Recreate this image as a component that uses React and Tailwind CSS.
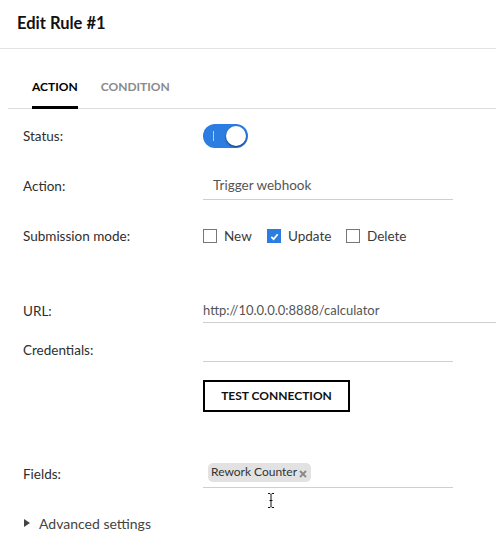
import { useState } from 'react';

const FONT = { fontFamily: 'Lato, "Open Sans", sans-serif' };

function Toggle() {
  return (
    <div className="relative w-[45px] h-[24px] rounded-full bg-[#2b7de1]">
      <span className="absolute left-[10px] top-[7px] w-px h-[10px] bg-[#a9d0f5]" />
      <span className="absolute right-[2px] top-[2px] w-[20px] h-[20px] rounded-full bg-white shadow-[0_1px_2px_rgba(0,0,40,0.6)]" />
    </div>
  );
}

function Checkbox({ checked, label, className = '' }) {
  return (
    <label className={`flex items-center gap-[7px] text-[13.5px] text-[#3a3a3a] ${className}`}>
      {checked ? (
        <span className="w-[14px] h-[14px] bg-[#2b7de1] flex items-center justify-center">
          <svg width="9" height="9" viewBox="0 0 10 10" fill="none" stroke="white" strokeWidth="2">
            <path d="M1.5 5.5 L4 8 L8.5 2.5" />
          </svg>
        </span>
      ) : (
        <span className="w-[14px] h-[14px] border border-[#777] bg-white" />
      )}
      {label}
    </label>
  );
}

function Row({ label, className = '', children }) {
  return (
    <div className={`flex items-center ${className}`}>
      <div className="w-[180px] shrink-0 text-[13.5px] text-[#2e2e2e]">{label}</div>
      {children}
    </div>
  );
}

export default function App() {
  const [tab] = useState('action');

  return (
    <div className="w-[496px] h-[551px] bg-white overflow-hidden relative" style={FONT}>
      {/* Header */}
      <div className="h-[49px] border-b border-[#e3e3e3] flex items-center px-[17px]">
        <h1 className="text-[16.5px] font-bold text-[#111] -mt-[2px]">Edit Rule #1</h1>
      </div>

      {/* Tabs */}
      <div className="ml-2 h-[60px] border-b border-[#dcdcdc] flex items-end gap-[23px] pl-6">
        <div className={`pb-[10px] -mb-px border-b-[3px] text-[12px] font-bold ${tab === 'action' ? 'border-black text-black' : 'border-transparent'}`}>
          ACTION
        </div>
        <div className="pb-[10px] -mb-px border-b-[3px] border-transparent text-[12px] font-bold text-[#8a8a8a]">
          CONDITION
        </div>
      </div>

      {/* Form */}
      <div className="pl-[23px] pt-[3px]">
        <Row label="Status:" className="h-[48px]">
          <Toggle />
        </Row>

        <Row label="Action:" className="h-[52px]">
          <div className="w-[250px] h-[28px] border-b border-[#cfcfcf] pl-[10px] pt-[3px] text-[13.5px] text-[#555]">
            Trigger webhook
          </div>
        </Row>

        <Row label="Submission mode:" className="h-[48px]">
          <div className="flex items-center">
            <Checkbox label="New" className="w-[64px]" />
            <Checkbox checked label="Update" className="w-[79px]" />
            <Checkbox label="Delete" />
          </div>
        </Row>

        <Row label="URL:" className="h-[48px] mt-[27px]">
          <div className="w-[310px] shrink-0 h-[24px] border-b border-[#cfcfcf] pt-[2px] text-[13px] text-[#555]">
            http://10.0.0.0:8888/calculator
          </div>
        </Row>

        <Row label="Credentials:" className="h-[30px]">
          <div className="w-[250px] h-[24px] border-b border-[#cfcfcf]" />
        </Row>

        <div className="ml-[180px] mt-[15px]">
          <button className="w-[147px] h-[32px] border-2 border-black text-[12px] font-bold text-[#111]">
            TEST CONNECTION
          </button>
        </div>

        <Row label="Fields:" className="h-[48px] mt-[38px]">
          <div className="w-[250px] h-[27px] border-b border-[#cfcfcf] flex items-start pl-[5px]">
            <span className="flex items-center gap-[2px] h-[19px] mt-[2px] pl-[3px] pr-[4px] rounded-[5px] bg-[#e2e2e2] text-[12px] text-[#333]">
              Rework Counter
              <svg width="8" height="8" viewBox="0 0 8 8" stroke="#888" strokeWidth="1.8" className="mt-[3px]">
                <path d="M1 1 L7 7 M7 1 L1 7" />
              </svg>
            </span>
          </div>
        </Row>

        <div className="flex items-center gap-[9px] mt-[1px] h-[48px]">
          <svg width="6" height="8" viewBox="0 0 6 8" fill="#444" className="ml-[1px]">
            <path d="M0 0 L6 4 L0 8 Z" />
          </svg>
          <span className="text-[14px] text-[#444]">Advanced settings</span>
        </div>
      </div>

      {/* text cursor */}
      <svg className="absolute left-[267px] top-[493px]" width="8" height="15" viewBox="0 0 8 15" fill="none" stroke="#111" strokeWidth="1">
        <path d="M1 0.5 H3 L4 1.5 L5 0.5 H7 M4 1.5 V13.5 M1 14.5 H3 L4 13.5 L5 14.5 H7 M2.5 7.5 H5.5" />
      </svg>
    </div>
  );
}
